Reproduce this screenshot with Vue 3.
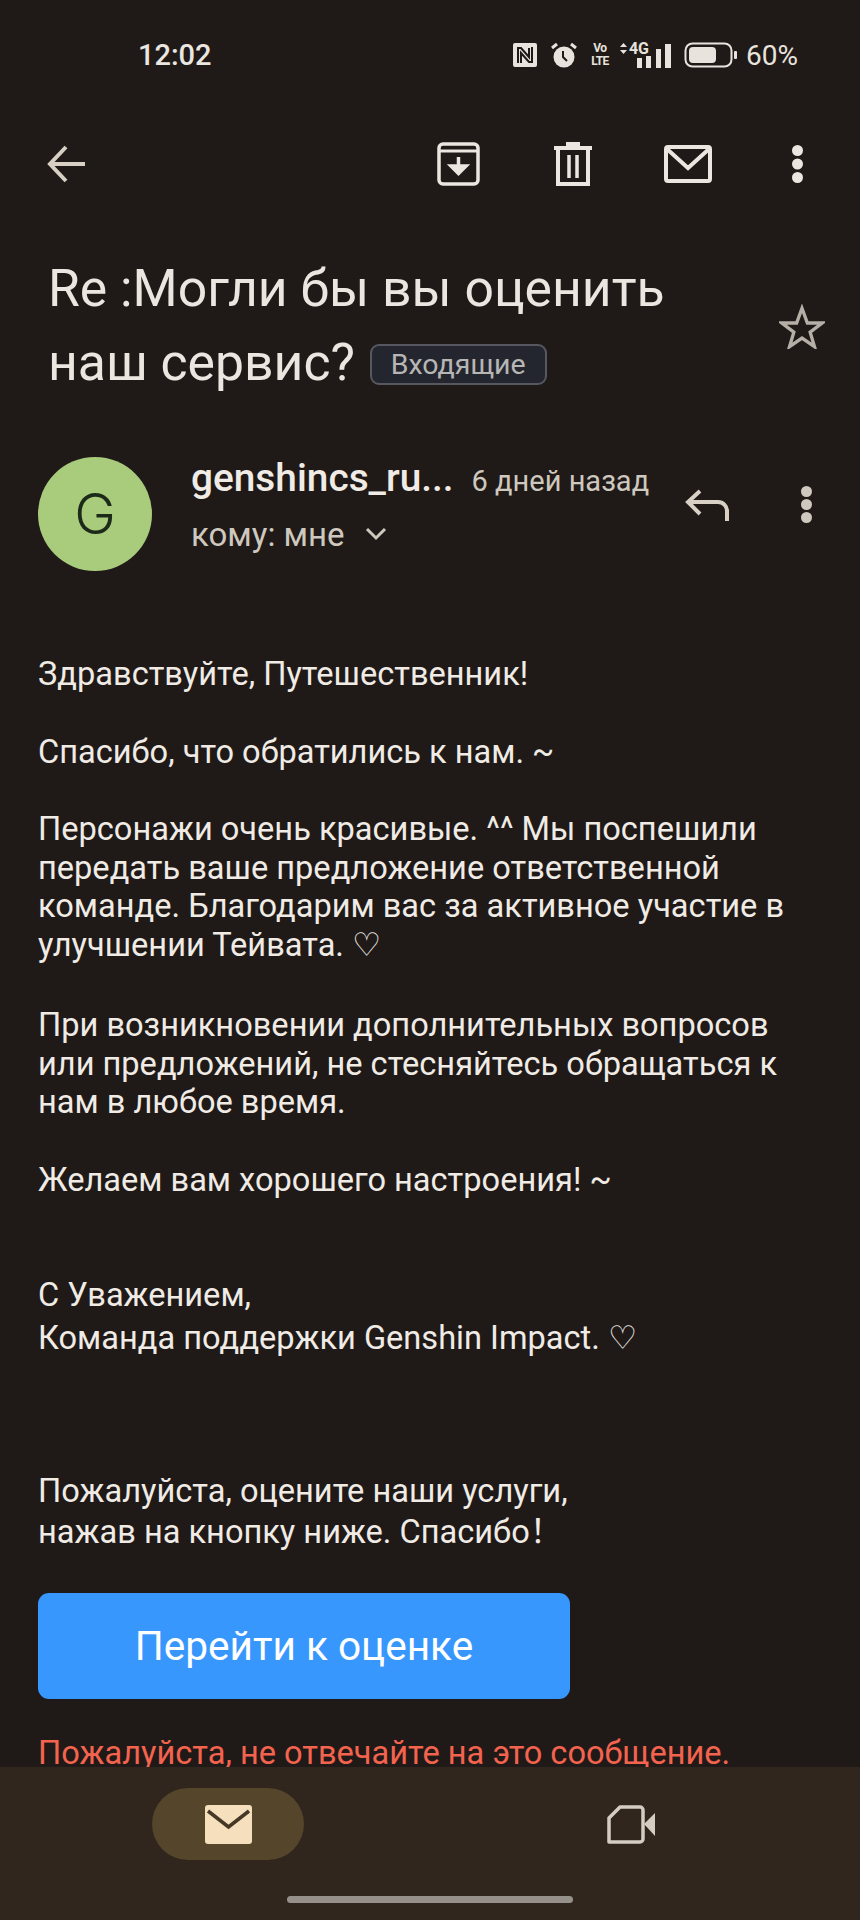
<script setup>
const paragraphs = [
  { lines: ['Здравствуйте, Путешественник!'] },
  { lines: ['Спасибо, что обратились к нам. ~'] },
  { lines: ['Персонажи очень красивые. ^^ Мы поспешили', 'передать ваше предложение ответственной', 'команде. Благодарим вас за активное участие в', 'улучшении Тейвата. ♡'] },
  { lines: ['При возникновении дополнительных вопросов', 'или предложений, не стесняйтесь обращаться к', 'нам в любое время.'] },
  { lines: ['Желаем вам хорошего настроения! ~'] }
]
</script>

<template>
  <div class="phone">
    <div class="status">
      <span class="time">12:02</span>
      <div class="status_icons">
        <svg width="24" height="24" viewBox="0 0 24 24"><rect x="0" y="0" width="24" height="24" rx="2" fill="#e8e3dd"/><path d="M5 20V5h3l8 9V5M19 4v15h-3L8 10v10" fill="none" stroke="#1f1a18" stroke-width="2"/></svg>
        <svg class="alarm" width="26" height="26" viewBox="0 0 26 26"><circle cx="13" cy="15" r="10.500" fill="#e8e3dd"/><path d="M12 9v6l4 4" fill="none" stroke="#1f1a18" stroke-width="2"/><path d="M1 6l5-4M25 6l-5-4" stroke="#e8e3dd" stroke-width="3"/></svg>
        <div class="volte"><span>Vo</span><span>LTE</span></div>
        <div class="signal">
          <div class="net"><svg width="7" height="11" viewBox="0 0 7 11"><path d="M3.500 0L7 4H0zM3.500 11L7 7H0z" fill="#e8e3dd"/></svg><span>4G</span></div>
          <svg class="bars" width="34" height="24" viewBox="0 0 34 24"><rect x="0" y="14" width="5" height="10" fill="#e8e3dd"/><rect x="9" y="12" width="5" height="12" fill="#e8e3dd"/><rect x="19" y="5" width="5" height="19" fill="#e8e3dd"/><rect x="28" y="0" width="6" height="24" fill="#e8e3dd"/></svg>
        </div>
        <svg class="batt" width="53" height="26" viewBox="0 0 53 26"><rect x="1.500" y="1.500" width="46" height="23" rx="7" fill="none" stroke="#e8e3dd" stroke-width="2"/><rect x="5" y="5" width="27" height="16" rx="4" fill="#e8e3dd"/><rect x="50" y="9" width="3" height="8" rx="1" fill="#e8e3dd"/></svg>
        <span class="pct">60%</span>
      </div>
    </div>

    <div class="toolbar">
      <svg class="back" width="38" height="38" viewBox="0 0 38 38"><path d="M38 19H4M19 2L3 19l16 17" fill="none" stroke="#d8d0c4" stroke-width="4"/></svg>
      <div class="toolbar_right">
        <svg class="ic_archive" width="43" height="44" viewBox="0 0 43 44"><path d="M6 2h31a4 4 0 0 1 4 4v32a4 4 0 0 1-4 4H6a4 4 0 0 1-4-4V6a4 4 0 0 1 4-4z" fill="none" stroke="#ebe6e0" stroke-width="3.500"/><path d="M2 9h39" stroke="#ebe6e0" stroke-width="3"/><path d="M21.500 15v12M14 24l7.500 7.500L29 24z" fill="#ebe6e0" stroke="#ebe6e0" stroke-width="3.500"/></svg>
        <svg class="ic_trash" width="38" height="44" viewBox="0 0 38 44"><path d="M0 6h38M12 2h14" stroke="#ebe6e0" stroke-width="4"/><path d="M4 8v34h30V8" fill="none" stroke="#ebe6e0" stroke-width="4"/><path d="M15 13v23M23 13v23" stroke="#ebe6e0" stroke-width="3.500"/></svg>
        <svg class="ic_mail" width="48" height="38" viewBox="0 0 48 38"><rect x="2" y="2" width="44" height="34" rx="2" fill="none" stroke="#ebe6e0" stroke-width="4"/><path d="M3 4l21 19L45 4" fill="none" stroke="#ebe6e0" stroke-width="4"/></svg>
        <svg width="11" height="38" viewBox="0 0 11 38"><circle cx="5.500" cy="5.500" r="5.500" fill="#ebe6e0"/><circle cx="5.500" cy="19" r="5.500" fill="#ebe6e0"/><circle cx="5.500" cy="32.500" r="5.500" fill="#ebe6e0"/></svg>
      </div>
    </div>

    <div class="subject">
      <h1>Re :Могли бы вы оценить<br>наш сервис? <span class="tag">Входящие</span></h1>
      <svg class="star" width="46" height="45" viewBox="0 0 48 46"><path d="M24 4l5.600 15.400H45L32.500 29 37 44 24 35 11 44l4.500-15L3 19.400h15.400z" fill="none" stroke="#b5afa8" stroke-width="3.500"/></svg>
    </div>

    <div class="sender">
      <div class="avatar">G</div>
      <div class="sender_info">
        <div class="sender_top">
          <span class="name">genshincs_ru...</span>
          <span class="date">6 дней назад</span>
        </div>
        <div class="to">кому: мне
          <svg width="22" height="14" viewBox="0 0 22 14"><path d="M2 2l9 9 9-9" fill="none" stroke="#cfc8bf" stroke-width="3"/></svg>
        </div>
      </div>
      <svg class="reply" width="44" height="32" viewBox="0 0 44 32"><path d="M15 2L3 13l12 12M4 13h29a9 9 0 0 1 9 9v10" fill="none" stroke="#d8d0c4" stroke-width="4"/></svg>
      <svg class="more" width="11" height="37" viewBox="0 0 11 37"><circle cx="5.500" cy="5.500" r="5.500" fill="#cfc8bf"/><circle cx="5.500" cy="18.500" r="5.500" fill="#cfc8bf"/><circle cx="5.500" cy="31.500" r="5.500" fill="#cfc8bf"/></svg>
    </div>

    <div class="body">
      <p v-for="(p, idx) in paragraphs" :key="idx" class="para">
        <span v-for="line in p.lines" :key="line" class="line">{{ line }}</span>
      </p>
      <p class="sign">
        <span>С Уважением,</span>
        <span>Команда поддержки Genshin Impact. ♡</span>
      </p>
      <p class="sign rate">
        <span>Пожалуйста, оцените наши услуги,</span>
        <span>нажав на кнопку ниже. Спасибо！</span>
      </p>
      <a class="btn">Перейти к оценке</a>
      <p class="warn">Пожалуйста, не отвечайте на это сообщение.</p>
    </div>

    <div class="bottom">
      <div class="tabs">
        <div class="tab_pill">
          <svg width="47" height="39" viewBox="0 0 47 39"><rect width="47" height="39" rx="3" fill="#f5dfbd"/><path d="M3 6l20.500 16L44 6" fill="none" stroke="#453825" stroke-width="3.500"/></svg>
        </div>
        <div class="tab_video">
          <svg width="48" height="39" viewBox="0 0 48 39"><path d="M13 2h20a3 3 0 0 1 3 3v29a3 3 0 0 1-3 3H2V13z" fill="none" stroke="#d4cdc2" stroke-width="3.500" stroke-linejoin="round"/><path d="M37 19L48 8v23z" fill="#d4cdc2"/></svg>
        </div>
      </div>
      <div class="home_bar"></div>
    </div>
  </div>
</template>

<style>
body { background: #1f1a18; }
</style>

<style scoped>
.phone {
  display: flex;
  flex-direction: column;
  width: 860px;
  height: 1920px;
  overflow: hidden;
  background: #1f1a18;
  color: #f0ebe5;
  font-family: Roboto, "DejaVu Sans", "Noto Sans CJK SC", sans-serif;
}

/* status bar */
.status {
  display: flex;
  align-items: center;
  justify-content: space-between;
  flex: none;
  height: 110px;
  padding: 0 62px 0 138px;
  box-sizing: border-box;
}
.time { font-size: 29px; font-weight: 500; color: #ebe6e0; }
.status_icons { display: flex; align-items: center; gap: 14px; color: #e8e3dd; }
.volte { display: flex; flex-direction: column; align-items: center; width: 18px; margin-right: -3px; font-size: 12px; font-weight: 700; line-height: 13px; letter-spacing: -0.6px; }
.signal { display: flex; align-items: flex-end; }
.net { display: flex; align-items: center; gap: 2px; font-size: 16px; font-weight: 700; line-height: 12px; margin-bottom: 13px; margin-right: -12px; }
.bars { margin-top: 1px; }
.batt { margin-left: -1px; }
.pct { font-size: 28px; margin-left: -5px; }

/* toolbar */
.toolbar {
  display: flex;
  align-items: center;
  justify-content: space-between;
  flex: none;
  height: 84px;
  margin-top: 12px;
  padding: 0 57px 0 47px;
}
.toolbar_right { display: flex; align-items: center; }
.ic_archive { margin-right: 74px; }
.ic_trash { margin-right: 72px; }
.ic_mail { margin-right: 80px; }

/* subject */
.subject {
  display: flex;
  align-items: center;
  justify-content: space-between;
  flex: none;
  margin-top: 46px;
  padding: 0 35px 0 48px;
}
h1 { margin: 0; font-size: 51.700px; font-weight: 400; line-height: 74px; color: #ebe6e0; white-space: nowrap; }
.tag {
  display: inline-block;
  margin-left: 2px;
  padding: 0 19px;
  height: 41px;
  line-height: 37px;
  box-sizing: border-box;
  font-size: 28.500px;
  color: #b8b6b4;
  background: #24262f;
  border: 2px solid #56575f;
  border-radius: 9px;
  vertical-align: 6px;
}

/* sender */
.sender {
  display: flex;
  align-items: center;
  flex: none;
  margin-top: 55px;
  padding: 0 48px 0 38px;
}
.avatar {
  width: 114px;
  height: 114px;
  flex: none;
  border-radius: 50%;
  background: #a8cc7c;
  color: #1c2a1a;
  font-family: Inter, sans-serif;
  font-size: 56px;
  font-weight: 300;
  line-height: 114px;
  text-align: center;
}
.sender_info { flex: 1; margin-left: 39px; margin-bottom: 19px; }
.sender_top { display: flex; align-items: baseline; gap: 18px; line-height: 46px; }
.name { font-size: 38.800px; font-weight: 500; color: #f0ebe5; }
.date { font-size: 29px; color: #cfc8bf; }
.to { display: flex; align-items: center; gap: 20px; height: 38px; margin-top: 11px; font-size: 33px; color: #cfc8bf; }
.reply { margin-right: 72px; margin-top: -18px; }
.more { margin-top: -18px; }

/* mail body */
.body { flex: 1; min-height: 0; margin-top: 83px; padding: 0 38px; overflow: hidden; }
.para { margin: 0 0 39px; font-size: 32.600px; line-height: 38.500px; color: #f0ebe5; }
.para:nth-child(3) { margin-bottom: 42px; }
.line { display: block; white-space: nowrap; }
.sign { display: flex; flex-direction: column; margin: 75px 0 0; font-size: 32.600px; line-height: 43px; }
.rate { margin-top: 111px; line-height: 41px; }
.btn {
  display: block;
  width: 532px;
  height: 106px;
  margin-top: 40px;
  border-radius: 11px;
  background: #3797fd;
  color: #fff;
  font-size: 40.600px;
  line-height: 106px;
  text-align: center;
}
.warn { margin: 35px 0 0; font-size: 32.600px; color: #f4634e; white-space: nowrap; }

/* bottom nav */
.bottom { flex: none; height: 153px; background: #30261e; }
.tabs { display: flex; align-items: center; height: 129px; padding: 0 0 15px 152px; box-sizing: border-box; }
.tab_pill {
  display: flex;
  align-items: center;
  justify-content: center;
  width: 152px;
  height: 72px;
  border-radius: 36px;
  background: #54452b;
}
.tab_video { margin-left: 303px; display: flex; }
.home_bar { width: 286px; height: 7px; margin: 0 auto; border-radius: 4px; background: #95908a; }
</style>
